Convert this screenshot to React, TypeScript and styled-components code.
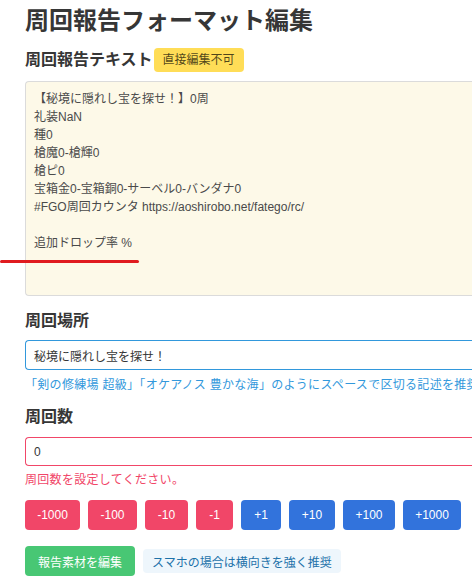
import React from "react";
import styled, { createGlobalStyle } from "styled-components";

const GlobalStyle = createGlobalStyle`
  html, body {
    margin: 0;
    padding: 0;
    background: #fff;
    overflow: hidden;
  }
  body {
    font-family: "Liberation Sans", "Noto Sans CJK JP", sans-serif;
    font-size: 12px;
    color: #4a4a4a;
  }
`;

const Page = styled.div`
  position: relative;
  width: 560px;
  padding: 7px 0 0 25px;
  box-sizing: border-box;
`;

const Title = styled.h1`
  margin: 0;
  font-size: 24px;
  line-height: 27px;
  font-weight: 700;
  color: #363636;
`;

const Heading = styled.h2<{ $top: number }>`
  margin: ${p => p.$top}px 0 0;
  display: flex;
  align-items: center;
  gap: 1px;
  font-size: 16px;
  line-height: 24px;
  font-weight: 700;
  color: #363636;
`;

const Tag = styled.span<{ $kind: "warning" | "info" }>`
  display: inline-flex;
  align-items: center;
  height: 24px;
  padding: 0 9px;
  border-radius: 4px;
  font-size: 12px;
  font-weight: 400;
  white-space: nowrap;
  background: ${p => (p.$kind === "warning" ? "#ffdd57" : "#eef6fc")};
  color: ${p => (p.$kind === "warning" ? "rgba(0,0,0,0.7)" : "#1d72aa")};
`;

const ReportText = styled.div`
  margin-top: 9px;
  height: 215px;
  box-sizing: border-box;
  padding: 8px 8px;
  border: 1px solid #dbdbdb;
  border-right: none;
  border-radius: 4px 0 0 4px;
  background: #fdf9e8;
  font-size: 12px;
  line-height: 18px;
  color: #4a4a4a;
  white-space: pre;
`;

const Input = styled.div<{ $color: string; $top: number; $height: number }>`
  margin-top: ${p => p.$top}px;
  height: ${p => p.$height}px;
  box-sizing: border-box;
  display: flex;
  align-items: center;
  padding: 0 8px;
  border: 1px solid ${p => p.$color};
  border-right: none;
  border-radius: 4px 0 0 4px;
  font-size: 12px;
  color: #363636;
  white-space: nowrap;
`;

const Help = styled.p<{ $color: string; $top: number }>`
  margin: ${p => p.$top}px 0 0;
  font-size: 12px;
  line-height: 18px;
  letter-spacing: 0.3px;
  color: ${p => p.$color};
  white-space: nowrap;
`;

const Buttons = styled.div<{ $top: number }>`
  margin-top: ${p => p.$top}px;
  display: flex;
  align-items: center;
  gap: 8px;
`;

const Button = styled.button<{ $bg: string; $width?: number }>`
  height: 30px;
  min-width: ${p => (p.$width ? `${p.$width}px` : "auto")};
  padding: 0 12px;
  border: none;
  border-radius: 4px;
  background: ${p => p.$bg};
  color: #fff;
  font-family: inherit;
  font-size: 12px;
  white-space: nowrap;
`;

const Underline = styled.div`
  position: absolute;
  left: 0;
  top: 260px;
  width: 139px;
  height: 3px;
  border-radius: 2px;
  background: #e01b1f;
`;

const RED = "#f14668";
const BLUE = "#3273dc";

const steps: { n: number; w: number }[] = [
  { n: -1000, w: 55 },
  { n: -100, w: 49 },
  { n: -10, w: 43 },
  { n: -1, w: 37 },
  { n: 1, w: 40 },
  { n: 10, w: 46 },
  { n: 100, w: 52 },
  { n: 1000, w: 58 },
];

const reportLines = [
  "【秘境に隠れし宝を探せ！】0周",
  "礼装NaN",
  "種0",
  "槍魔0-槍輝0",
  "槍ピ0",
  "宝箱金0-宝箱銅0-サーベル0-バンダナ0",
  "#FGO周回カウンタ https://aoshirobo.net/fatego/rc/",
  "",
  "追加ドロップ率 %",
];

export default function App() {
  return (
    <>
      <GlobalStyle />
      <Page>
        <Title>周回報告フォーマット編集</Title>
        <Heading $top={14}>
          周回報告テキスト<Tag $kind="warning">直接編集不可</Tag>
        </Heading>
        <ReportText>{reportLines.join("\n")}</ReportText>

        <Heading $top={13}>周回場所</Heading>
        <Input $color="#3298dc" $top={7} $height={30}>
          秘境に隠れし宝を探せ！
        </Input>
        <Help $color="#3298dc" $top={6}>
          「剣の修練場 超級」「オケアノス 豊かな海」のようにスペースで区切る記述を推奨
        </Help>

        <Heading $top={11}>周回数</Heading>
        <Input $color={RED} $top={8} $height={29}>
          0
        </Input>
        <Help $color={RED} $top={5}>
          周回数を設定してください。
        </Help>

        <Buttons $top={11}>
          {steps.map(({ n, w }) => (
            <Button key={n} $bg={n < 0 ? RED : BLUE} $width={w}>
              {n > 0 ? `+${n}` : `${n}`}
            </Button>
          ))}
        </Buttons>

        <Buttons $top={16}>
          <Button $bg="#48c774" $width={110}>報告素材を編集</Button>
          <Tag $kind="info">スマホの場合は横向きを強く推奨</Tag>
        </Buttons>

        <Underline />
      </Page>
    </>
  );
}
